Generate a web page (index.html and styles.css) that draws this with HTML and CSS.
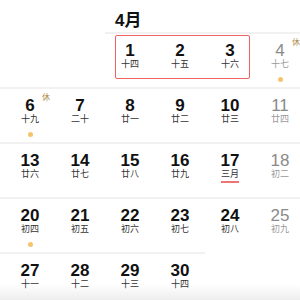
FILE: index.html
```html
<!DOCTYPE html>
<html lang="zh">
<head>
<meta charset="utf-8">
<link rel="stylesheet" href="styles.css">
</head>
<body>
<div class="cal">
  <div class="head">
    <div class="title">4月</div>
  </div>
  <div class="week">
    <div class="blank"></div><div class="blank"></div><div class="blank"></div>
    <div class="day"><span class="num">1</span><span class="lunar">十四</span></div>
    <div class="day"><span class="num">2</span><span class="lunar">十五</span></div>
    <div class="day"><span class="num">3</span><span class="lunar">十六</span></div>
    <div class="day off"><span class="num">4</span><span class="lunar">十七</span><span class="dot"></span><span class="rest">休</span></div>
    <div class="sel"></div>
  </div>
  <div class="week">
    <div class="day off"><span class="rest">休</span></div>
    <div class="day"><span class="num">6</span><span class="lunar">十九</span><span class="dot"></span><span class="rest">休</span></div>
    <div class="day"><span class="num">7</span><span class="lunar">二十</span></div>
    <div class="day"><span class="num">8</span><span class="lunar">廿一</span></div>
    <div class="day"><span class="num">9</span><span class="lunar">廿二</span></div>
    <div class="day"><span class="num">10</span><span class="lunar">廿三</span></div>
    <div class="day off"><span class="num">11</span><span class="lunar">廿四</span></div>
  </div>
  <div class="week">
    <div class="day off"></div>
    <div class="day"><span class="num">13</span><span class="lunar">廿六</span></div>
    <div class="day"><span class="num">14</span><span class="lunar">廿七</span></div>
    <div class="day"><span class="num">15</span><span class="lunar">廿八</span></div>
    <div class="day"><span class="num">16</span><span class="lunar">廿九</span></div>
    <div class="day"><span class="num">17</span><span class="lunar month">三月</span></div>
    <div class="day off"><span class="num">18</span><span class="lunar">初二</span></div>
  </div>
  <div class="week">
    <div class="day off"></div>
    <div class="day"><span class="num">20</span><span class="lunar">初四</span><span class="dot"></span></div>
    <div class="day"><span class="num">21</span><span class="lunar">初五</span></div>
    <div class="day"><span class="num">22</span><span class="lunar">初六</span></div>
    <div class="day"><span class="num">23</span><span class="lunar">初七</span></div>
    <div class="day"><span class="num">24</span><span class="lunar">初八</span></div>
    <div class="day off"><span class="num">25</span><span class="lunar">初九</span></div>
  </div>
  <div class="week">
    <div class="day off"></div>
    <div class="day"><span class="num">27</span><span class="lunar">十一</span></div>
    <div class="day"><span class="num">28</span><span class="lunar">十二</span></div>
    <div class="day"><span class="num">29</span><span class="lunar">十三</span></div>
    <div class="day"><span class="num">30</span><span class="lunar">十四</span></div>
    <div class="blank"></div><div class="blank"></div>
  </div>
</div>
<div class="fade"></div>
</body>
</html>
```

FILE: styles.css
```css
html, body {
  margin: 0;
  padding: 0;
  background: #ffffff;
}
body {
  width: 300px;
  height: 300px;
  overflow: hidden;
  position: relative;
  font-family: "Liberation Sans", "Noto Sans CJK SC", sans-serif;
  color: #111111;
}
.cal {
  margin-left: -45px;
  width: 350px;
}
.head {
  display: grid;
  grid-template-columns: repeat(7, 50px);
  height: 32px;
}
.title {
  grid-column: 4 / 8;
  padding: 12px 0 0 10px;
  font-size: 17px;
  line-height: 17px;
  font-weight: bold;
  color: #111111;
}
.week {
  display: grid;
  grid-template-columns: repeat(7, 50px);
  position: relative;
}
.blank {
  height: 55px;
}
.day {
  height: 55px;
  box-sizing: border-box;
  border-top: 2px solid #f1f1f1;
  padding-top: 9px;
  display: flex;
  flex-direction: column;
  align-items: center;
  position: relative;
}
.num {
  font-size: 17px;
  line-height: 16px;
  font-weight: bold;
  color: #111111;
}
.lunar {
  font-size: 9px;
  line-height: 11px;
  color: #333333;
}
.off .num {
  font-weight: normal;
  color: #8a8a8a;
}
.off .lunar {
  color: #9a9a9a;
}
.month {
  position: relative;
}
.month::after {
  content: "";
  position: absolute;
  left: 0;
  right: 0;
  bottom: -3px;
  height: 2px;
  background: #ef7474;
}
.dot {
  width: 5px;
  height: 5px;
  border-radius: 50%;
  background: #f6c36c;
  margin-top: 7px;
}
.rest {
  position: absolute;
  left: 37px;
  top: 4px;
  font-size: 8px;
  line-height: 9px;
  color: #b08a4c;
}
.sel {
  position: absolute;
  left: 160px;
  top: 3px;
  width: 135px;
  height: 44px;
  box-sizing: border-box;
  border: 1.5px solid #f06262;
  border-radius: 2px;
}
.fade {
  position: absolute;
  left: 0;
  bottom: 0;
  width: 300px;
  height: 16px;
  background: linear-gradient(to bottom, rgba(0,0,0,0), rgba(0,0,0,0.07));
}
```
